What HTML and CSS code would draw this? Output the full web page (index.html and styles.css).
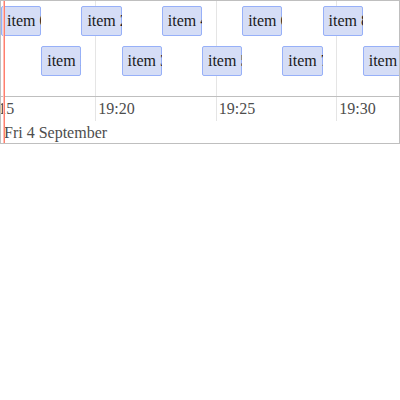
FILE: index.html
```html
<!DOCTYPE html>
<html lang="en">
<head>
<meta charset="utf-8">
<title>Timeline</title>
<link rel="stylesheet" href="styles.css">
</head>
<body>
<main class="timeline">
  <div class="ticks">
    <div class="tick"><span class="tick-label">19:15</span></div>
    <div class="tick"><span class="tick-label">19:20</span></div>
    <div class="tick"><span class="tick-label">19:25</span></div>
    <div class="tick"><span class="tick-label">19:30</span></div>
  </div>
  <div class="items">
    <div class="item">item 0</div>
    <div class="item lower">item 1</div>
    <div class="item">item 2</div>
    <div class="item lower">item 3</div>
    <div class="item">item 4</div>
    <div class="item lower">item 5</div>
    <div class="item">item 6</div>
    <div class="item lower">item 7</div>
    <div class="item">item 8</div>
    <div class="item lower">item 9</div>
  </div>
  <div class="date">Fri 4 September</div>
  <div class="current-time"></div>
</main>
</body>
</html>
```

FILE: styles.css
```css
* {
  box-sizing: border-box;
}

body {
  margin: 0;
  background: #fff;
  font: 16px/18px "Liberation Serif", serif;
}

.timeline {
  position: relative;
  display: grid;
  grid-template-columns: minmax(0, 1fr);
  grid-template-rows: 96px 24px 22px;
  border: 1px solid #bfbfbf;
  overflow: hidden;
}

.ticks {
  grid-area: 1 / 1 / 3 / 2;
  display: grid;
  grid-template-columns: repeat(4, 28.4%);
  margin-left: -6.6%;
}

.tick {
  display: flex;
  align-items: flex-end;
  padding: 3px 2px;
  border-left: 1px solid #e5e5e5;
}

.tick-label,
.date {
  color: #4d4d4d;
}

.items {
  grid-area: 1 / 1 / 2 / 2;
  position: relative;
  display: grid;
  grid-template-columns: repeat(10, 10.1%);
  grid-template-rows: 70px;
  padding-top: 5px;
  border-bottom: 1px solid #bfbfbf;
}

.item {
  align-self: start;
  padding: 5px;
  border: 1px solid #97b0f8;
  border-radius: 2px;
  background: #d5ddf6;
  color: #1a1a1a;
  white-space: nowrap;
  overflow: clip;
  overflow-clip-margin: border-box;
}

.lower {
  align-self: end;
}

.date {
  grid-area: 3 / 1 / 4 / 2;
  padding: 3px 3px 0;
}

.current-time {
  position: absolute;
  top: 0;
  bottom: 0;
  left: 2px;
  width: 2px;
  border-left: 1px solid #ffbfb6;
  background: #ff7f6e;
}
```
